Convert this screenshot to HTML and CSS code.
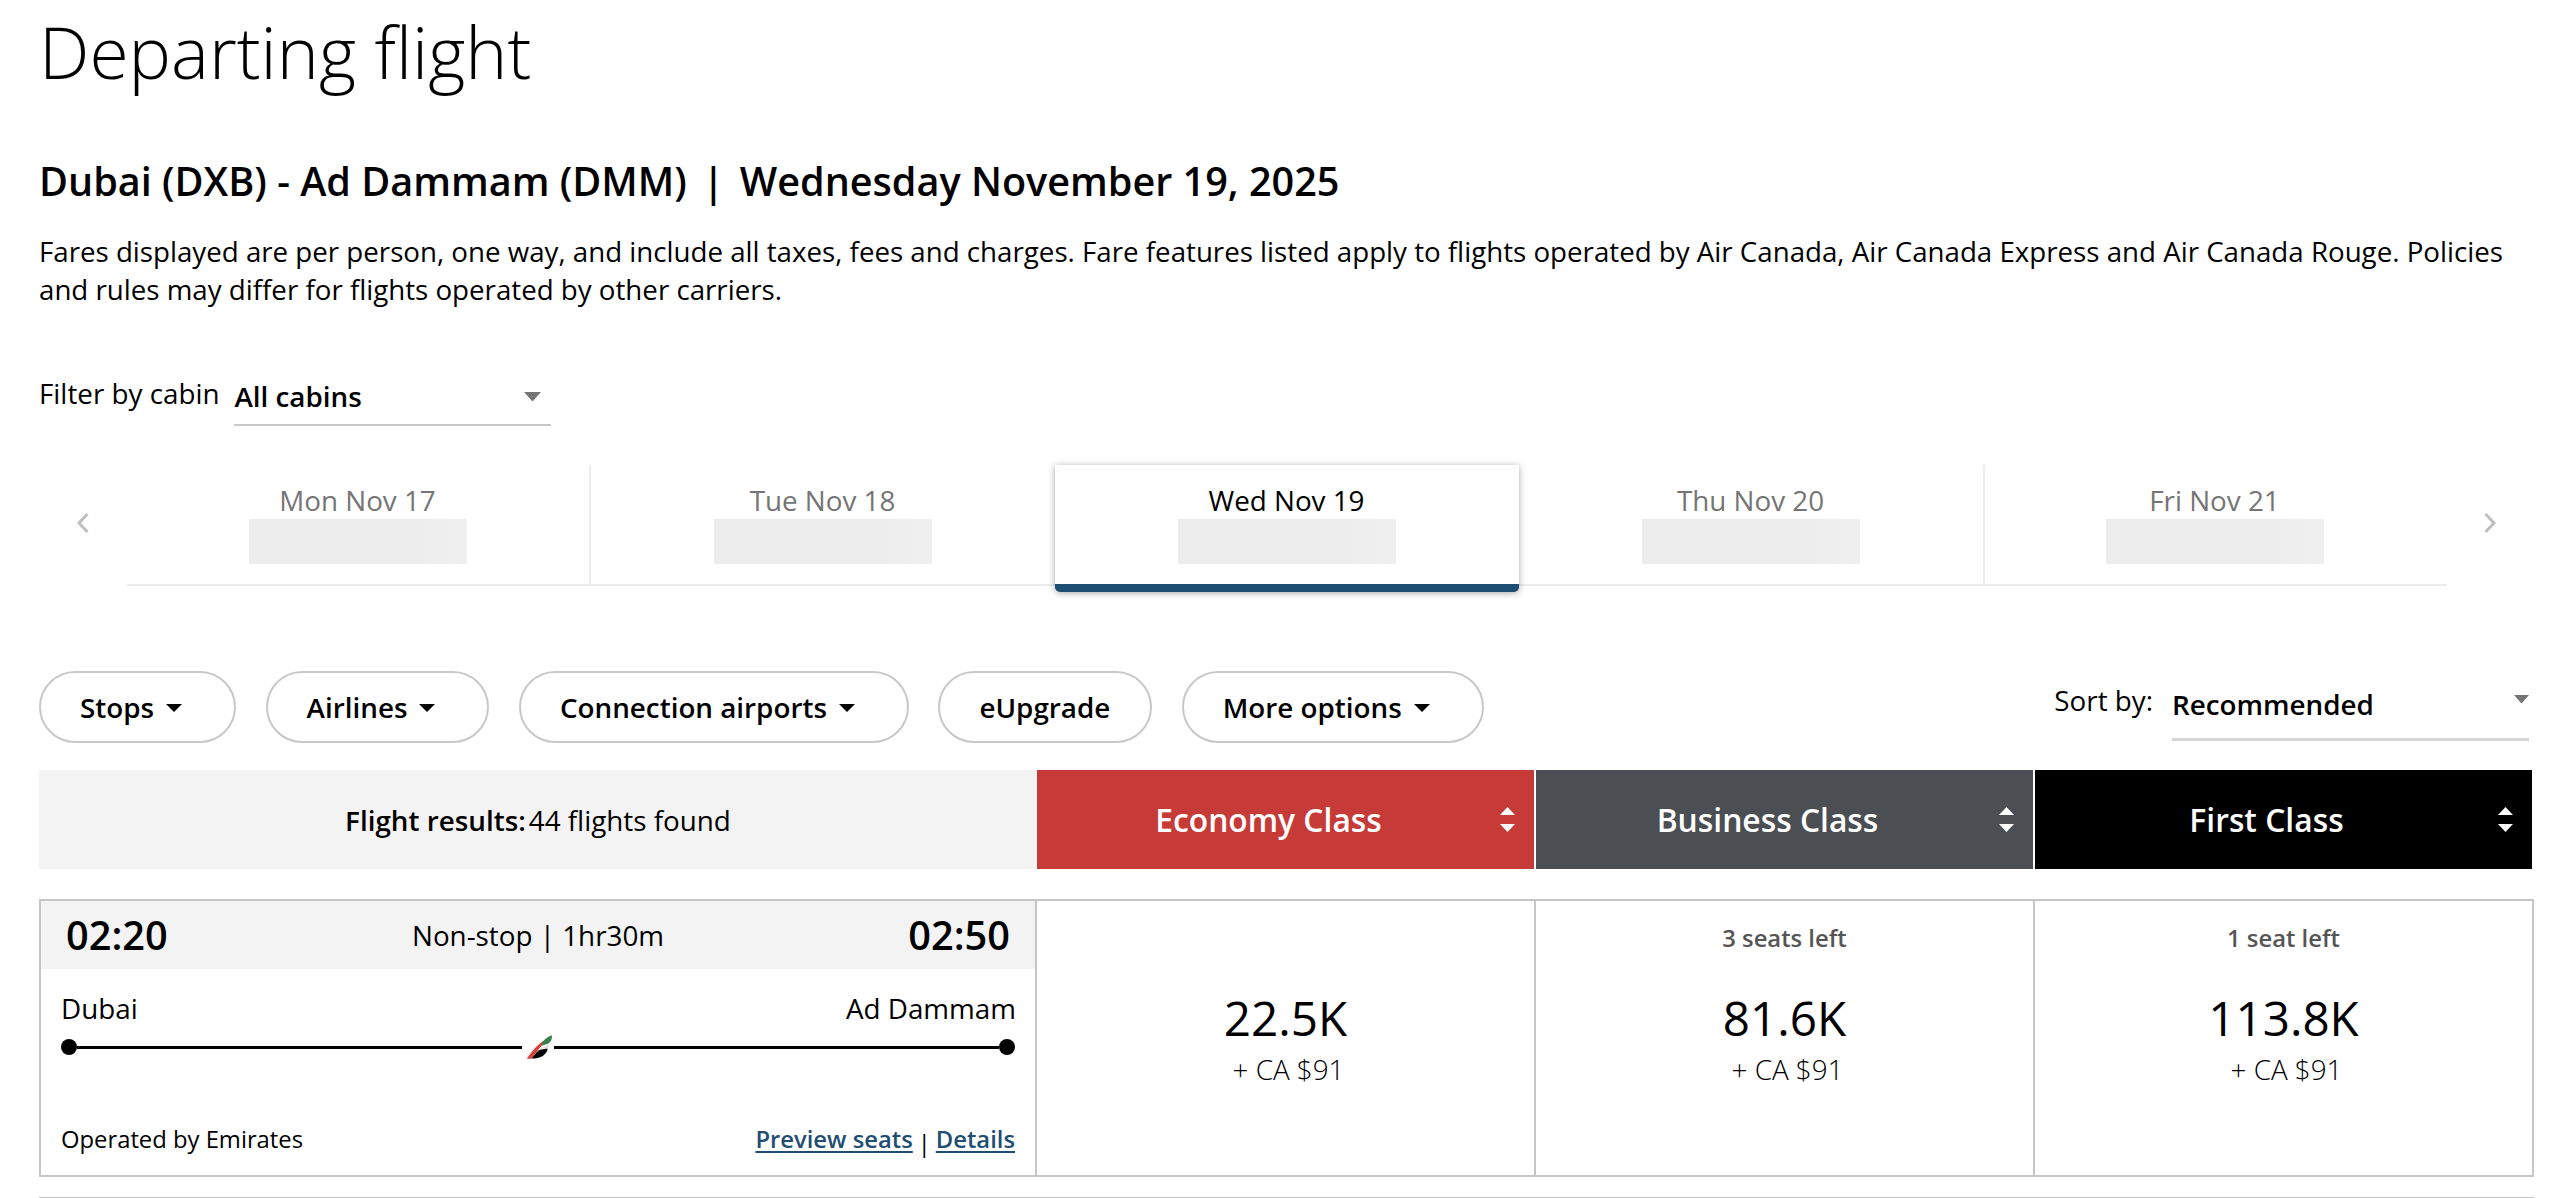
FILE: index.html
```
<!DOCTYPE html>
<html lang="en">
  <head>
    <meta charset="UTF-8" />
    <meta name="viewport" content="width=device-width, initial-scale=1.0" />
    <title>Departing flight</title>
    <link rel="stylesheet" href="styles.css">
  </head>
  <body>
    <main class="container">
      <h1>Departing flight</h1>
      <h2>
        <span>Dubai (DXB) - Ad Dammam (DMM)</span>
        <span class="divider">|</span>
        <span>Wednesday November 19, 2025</span>
      </h2>
      <p class="description">
        Fares displayed are per person, one way, and include all taxes, fees and
        charges. Fare features listed apply to flights operated by Air Canada,
        Air Canada Express and Air Canada Rouge. Policies and rules may differ
        for flights operated by other carriers.
      </p>

      <div class="cabin-filter">
        <span class="label">Filter by cabin</span>
        <div class="select select-cabin">
          <span>All cabins</span>
          <span class="caret"></span>
        </div>
      </div>

      <nav class="dates">
        <button type="button" class="arrow">
          <svg width="12" height="20" viewBox="0 0 12 20"><path d="M10.5 1 2 10l8.5 9" /></svg>
        </button>
        <ul class="date-list">
          <li>Mon Nov 17<span class="placeholder"></span></li>
          <li>Tue Nov 18<span class="placeholder"></span></li>
          <li class="active">Wed Nov 19<span class="placeholder"></span></li>
          <li>Thu Nov 20<span class="placeholder"></span></li>
          <li>Fri Nov 21<span class="placeholder"></span></li>
        </ul>
        <button type="button" class="arrow">
          <svg width="12" height="20" viewBox="0 0 12 20"><path d="M1.5 1 10 10l-8.5 9" /></svg>
        </button>
      </nav>

      <div class="toolbar">
        <div class="filters">
          <button type="button" class="pill">Stops<span class="caret"></span></button>
          <button type="button" class="pill">Airlines<span class="caret"></span></button>
          <button type="button" class="pill">Connection airports<span class="caret"></span></button>
          <button type="button" class="pill">eUpgrade</button>
          <button type="button" class="pill">More options<span class="caret"></span></button>
        </div>
        <div class="sort">
          <span class="label">Sort by:</span>
          <div class="select select-sort">
            <span>Recommended</span>
            <span class="caret"></span>
          </div>
        </div>
      </div>

      <div class="row results-header">
        <div class="count"><strong>Flight results:</strong><span>44 flights found</span></div>
        <div class="cabin economy">
          <span>Economy Class</span>
          <svg class="sorter" width="15" height="25" viewBox="0 0 15 25"><path d="M7.5 0 15 8H0zM7.5 25 0 17h15z" /></svg>
        </div>
        <div class="cabin business">
          <span>Business Class</span>
          <svg class="sorter" width="15" height="25" viewBox="0 0 15 25"><path d="M7.5 0 15 8H0zM7.5 25 0 17h15z" /></svg>
        </div>
        <div class="cabin first">
          <span>First Class</span>
          <svg class="sorter" width="15" height="25" viewBox="0 0 15 25"><path d="M7.5 0 15 8H0zM7.5 25 0 17h15z" /></svg>
        </div>
      </div>

      <div class="row flight">
        <div class="itinerary">
          <div class="times">
            <span class="time">02:20</span>
            <span>Non-stop | 1hr30m</span>
            <span class="time">02:50</span>
          </div>
          <div class="cities">
            <span>Dubai</span>
            <span>Ad Dammam</span>
          </div>
          <div class="route">
            <span class="dot"></span>
            <span class="line"></span>
            <svg class="airline" width="32" height="26" viewBox="0 0 32 26">
              <path fill="#e3e6e4" d="M17 15l9-4.500 1.500 1-2 3z" />
              <path fill="#39804f" d="M29.800 1.200c.6 3-.5 6.500-4 8.600l-6.300 2-3 3 4.300-7.300c2.500-3 5.500-5 9-6.300z" />
              <path fill="#d8403a" d="M4.800 24.800C8 20 11 16 14 13c2.500-2.500 5-5 8.500-6.500-2 2-2.700 4-3.700 6L9.300 24.800z" />
              <path fill="#000" d="M25.500 14.500c0 2-.7 3.500-2 4.700-1.500 2-3 3.200-5.500 4-2.500 1-5.500 1.300-8.500 1.200l4-4.600c1-1.800 2.500-3 4.500-4z" />
            </svg>
            <span class="line"></span>
            <span class="dot"></span>
          </div>
          <div class="operator">
            <span>Operated by Emirates</span>
            <div class="links">
              <a href="#">Preview seats</a>
              <span class="bar">|</span>
              <a href="#">Details</a>
            </div>
          </div>
        </div>
        <div class="fare">
          <span class="seats"></span>
          <span class="points">22.5K</span>
          <span class="cash">+ CA $91</span>
        </div>
        <div class="fare">
          <span class="seats">3 seats left</span>
          <span class="points">81.6K</span>
          <span class="cash">+ CA $91</span>
        </div>
        <div class="fare">
          <span class="seats">1 seat left</span>
          <span class="points">113.8K</span>
          <span class="cash">+ CA $91</span>
        </div>
      </div>

      <div class="next-flight"></div>
    </main>
  </body>
</html>
```
FILE: styles.css
```
* {
  margin: 0;
  padding: 0;
  box-sizing: border-box;
}
body {
  font-family: "Open Sans", sans-serif;
  font-size: 27.8px;
  line-height: 38px;
  color: #000;
  background: #fff;
}
.container {
  width: 2534px;
  padding: 8px 0 0 39px;
}
h1 {
  font-size: 71.4px;
  font-weight: 300;
  line-height: 87px;
}
h2 {
  display: flex;
  margin-top: 59px;
  font-size: 39.6px;
  font-weight: 600;
  line-height: 54px;
}
h2 .divider {
  width: 53px;
  text-align: center;
}
.description {
  margin-top: 25px;
  font-size: 27.7px;
  line-height: 37.5px;
}
.caret {
  width: 17px;
  border: solid transparent;
  border-width: 9px 8.5px 0;
  border-top-color: #000;
}
.select {
  display: flex;
  align-items: center;
  justify-content: space-between;
  border-bottom: 2px solid #c8c8c8;
  font-weight: 600;
}
.select .caret {
  border-top-color: #757575;
}
.cabin-filter {
  display: flex;
  align-items: flex-start;
  height: 56px;
  margin-top: 62px;
  padding-top: 4px;
}
.select-cabin {
  width: 317px;
  height: 52px;
  margin-left: 15px;
  padding: 3px 10px 9px 0;
}

.dates {
  display: flex;
  margin-top: 39px;
}
.arrow {
  width: 88.5px;
  height: 119px;
  background: none;
  border: none;
}
.arrow path {
  fill: none;
  stroke: #bdbfc1;
  stroke-width: 3;
}
.date-list {
  display: grid;
  grid-template-columns: repeat(5, 464px);
  align-items: start;
  height: 121px;
  list-style: none;
  border-bottom: 2px solid #ececec;
}
.date-list li {
  display: flex;
  flex-direction: column;
  align-items: center;
  height: 119px;
  padding-top: 16px;
  color: #757575;
}
.date-list li:first-child {
  border-right: 2px solid #ececec;
}
.date-list li:last-child {
  padding-right: 2px;
  border-left: 2px solid #ececec;
}
.date-list .active {
  height: 127px;
  background: #fff;
  border-bottom: 8px solid #1f4e73;
  border-radius: 0 0 5px 5px;
  box-shadow: 0 1px 7px rgba(0, 0, 0, 0.35);
  color: #000;
}
.placeholder {
  width: 218px;
  height: 45px;
  background: linear-gradient(to right, #ededed 80%, #f0f0f0);
}

.toolbar {
  display: flex;
  justify-content: space-between;
  margin-top: 85px;
}
.filters {
  display: flex;
  gap: 29.5px;
}
.pill {
  display: flex;
  align-items: center;
  height: 72px;
  padding: 0 40px 0 39px;
  background: #fff;
  border: 2px solid #c8c8c8;
  border-radius: 36px;
  font: 600 27.8px/38px "Open Sans", sans-serif;
  color: #000;
}
.pill .caret {
  width: 16px;
  margin: 1px 12px 0 12px;
  border-width: 8px 8px 0;
}
.sort {
  display: flex;
  padding: 10px 5px 0 0;
}
.select-sort {
  align-items: flex-start;
  width: 357px;
  height: 60px;
  margin-left: 19px;
  padding-top: 4px;
  border-bottom: 3px solid #d6d6d6;
}
.select-sort .caret {
  width: 15px;
  margin-top: 10px;
  border-width: 8px 7.5px 0;
}

.row {
  display: grid;
  grid-template-columns: 998px repeat(3, 499px);
}
.results-header {
  height: 99px;
  margin-top: 27px;
}
.count {
  display: flex;
  align-items: center;
  justify-content: center;
  gap: 3px;
  background: #f3f3f3;
}
.count strong {
  font-weight: 600;
}
.cabin {
  display: grid;
  grid-template-columns: 1fr 15px;
  align-items: center;
  padding-right: 19px;
  border-right: 2px solid #fff;
  font-size: 31.8px;
  font-weight: 600;
  text-align: center;
  color: #fff;
}
.sorter {
  fill: #fff;
}
.economy {
  background: #c63a38;
}
.business {
  background: #4b4e52;
}
.first {
  background: #000;
}

.flight {
  height: 278px;
  margin-top: 30px;
}
.next-flight {
  width: 2495px;
  height: 1px;
  margin-top: 20px;
  background: #c4c6c8;
}
.itinerary,
.fare {
  border: 2px solid #c4c6c8;
  border-left: none;
}
.itinerary {
  border-left: 2px solid #c4c6c8;
}
.times {
  display: flex;
  align-items: center;
  justify-content: space-between;
  height: 68px;
  padding: 0 25px;
  background: #f3f3f3;
}
.time {
  font-size: 39.7px;
  font-weight: 600;
}
.cities {
  display: flex;
  justify-content: space-between;
  margin: 20px 19px 0 20px;
}
.route {
  display: flex;
  align-items: center;
  height: 26px;
  margin: 7px 20px 0;
}
.dot {
  width: 16px;
  height: 16px;
  background: #000;
  border-radius: 50%;
}
.line {
  flex: 1;
  height: 3px;
  background: #000;
}
.operator {
  display: flex;
  justify-content: space-between;
  margin: 60px 20px 0;
  font-size: 23.8px;
}
.links {
  display: flex;
}
.links a {
  font-weight: 600;
  color: #1f4e73;
  text-underline-offset: 3px;
  text-decoration-thickness: 2px;
}
.bar {
  width: 23px;
  padding-top: 4px;
  text-align: center;
}
.fare {
  display: flex;
  flex-direction: column;
  align-items: center;
}
.seats {
  height: 32px;
  margin-top: 18px;
  font-size: 23.8px;
  font-weight: 600;
  color: #555;
}
.points {
  margin-top: 34px;
  font-size: 47.6px;
  line-height: 66px;
}
.cash {
  margin-top: -1px;
  padding-left: 6px;
  font-weight: 300;
}
```
